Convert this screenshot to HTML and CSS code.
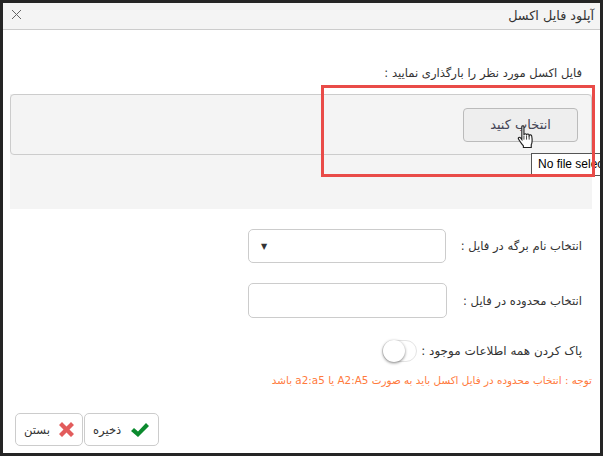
FILE: index.html
```html
<!DOCTYPE html>
<html lang="fa" dir="rtl">
<head>
    <meta charset="UTF-8">
    <meta name="viewport" content="width=device-width, initial-scale=1.0">
    <title>آپلود فایل اکسل</title>
    <link rel="stylesheet" href="styles.css">
</head>
<body>
    <div class="modal">
        <div class="modal-header">
            <div class="modal-title">آپلود فایل اکسل</div>
            <svg class="close-icon" width="9" height="9" viewBox="0 0 9 9">
                <path d="M0 0L9 9M9 0L0 9" stroke="#666" stroke-width="1" fill="none"/>
            </svg>
        </div>
        <div class="modal-body">
            <div class="upload-title">فایل اکسل مورد نظر را بارگذاری نمایید :</div>
            <div class="upload-area">
                <div class="upload-box">
                    <div class="upload-btn">انتخاب کنید</div>
                </div>
            </div>
            <div class="form-row form-row-first">
                <label class="form-label">انتخاب نام برگه در فایل :</label>
                <div class="form-select"><span class="select-arrow">▼</span></div>
            </div>
            <div class="form-row form-row-second">
                <label class="form-label">انتخاب محدوده در فایل :</label>
                <div class="form-input"></div>
            </div>
            <div class="toggle-row">
                <label class="toggle-label">پاک کردن همه اطلاعات موجود :</label>
                <div class="toggle"><div class="toggle-knob"></div></div>
            </div>
            <div class="note">توجه : انتخاب محدوده در فایل اکسل باید به صورت A2:A5 یا a2:a5 باشد</div>
        </div>
        <div class="modal-footer">
            <div class="footer-btn footer-btn-save">
                <svg width="18" height="14" viewBox="0 0 18 14">
                    <path d="M0 8L3 5L7 8.5L15 0L18 3L7 14Z" fill="#0b8a2e"/>
                </svg>
                <span>ذخیره</span>
            </div>
            <div class="footer-btn">
                <svg width="15" height="15" viewBox="0 0 15 15">
                    <path d="M0 3L3 0L7.5 4.5L12 0L15 3L10.5 7.5L15 12L12 15L7.5 10.5L3 15L0 12L4.5 7.5Z" fill="#e25c5c"/>
                </svg>
                <span>بستن</span>
            </div>
        </div>

        <!-- tooltip, annotation and cursor on top of the shot -->
        <div class="tooltip" dir="ltr">No file selected</div>
        <div class="red-frame"></div>
        <svg class="hand" width="19" height="23" viewBox="0 0 15 22">
            <path d="M4 1.5C4 .5 6 .5 6 1.5V9.5C6.5 8 8.3 8 8.5 9.5C9 8.2 10.8 8.4 11 10C11.5 9 13.5 9.2 13.5 11C14 14 14 17 13 19V21.5H5.5V20C4 18 2 16 .8 13.5C.2 12 1.6 11 2.8 12.4L4 14Z" fill="#fff" stroke="#222" stroke-width="1.1"/>
            <path d="M6 10V14M8.5 10V14M11 10V14" stroke="#222" stroke-width=".8" fill="none"/>
        </svg>
    </div>
</body>
</html>
```
FILE: styles.css
```css
html, body {
    margin: 0;
    padding: 0;
    width: 603px;
    height: 456px;
    overflow: hidden;
}

body {
    background-color: #252525;
    padding: 3px;
    box-sizing: border-box;
    font-family: "DejaVu Sans", "Noto Sans", sans-serif;
    font-size: 11.6px;
    color: #333;
}

.modal {
    position: relative;
    width: 597px;
    height: 450px;
    background-color: #fff;
    overflow: hidden;
    display: flex;
    flex-direction: column;
}

.modal-header {
    height: 23px;
    background-color: #f4f4f4;
    border-bottom: 1px solid #ccc;
    display: flex;
    align-items: center;
    justify-content: space-between;
    padding: 0 6px 3px 9px;
}

.modal-title {
    font-size: 12.8px;
    padding-top: 2px;
    color: #333;
}

.modal-body {
    flex: 1;
    padding: 0 8px 0 7px;
}

.upload-title {
    margin-top: 33px;
    padding-right: 10px;
    height: 31px;
    line-height: 20px;
}

.upload-area {
    background-color: #f4f4f4;
    height: 115px;
}

.upload-box {
    height: 59px;
    border: 1px solid #ccc;
    border-radius: 4px;
    display: flex;
    align-items: center;
    padding-right: 13px;
}

.upload-btn {
    width: 113px;
    height: 32px;
    line-height: 31px;
    font-size: 13px;
    text-align: center;
    background-color: #eee;
    border: 1px solid #bbb;
    border-radius: 4px;
    color: #445;
}

.form-row {
    display: flex;
    align-items: center;
    padding-right: 10px;
}

.form-row-first {
    margin-top: 20px;
}

.form-row-second {
    margin-top: 20px;
}

.form-label {
    width: 136px;
    flex-shrink: 0;
}

.form-select, .form-input {
    border: 1px solid #ccc;
    border-radius: 5px;
    background-color: #fff;
}

.form-select {
    display: flex;
    align-items: center;
    justify-content: flex-end;
    padding-left: 12px;
    width: 184px;
    height: 32px;
}

.form-input {
    width: 197px;
    height: 33px;
    margin-right: -1px;
}

.select-arrow {
    font-size: 8px;
}

.toggle-row {
    display: flex;
    align-items: center;
    margin-top: 22px;
    padding-right: 10px;
    gap: 4px;
}

.toggle-label {
    font-size: 12px;
}

.toggle {
    width: 33px;
    height: 20px;
    border: 1px solid #e4e4e4;
    border-radius: 11px;
    display: flex;
    justify-content: flex-end;
}

.toggle-knob {
    width: 22px;
    height: 22px;
    margin: -1px -1px 0 0;
    border-radius: 50%;
    background-color: #fff;
    box-shadow: 0 1px 3px rgba(0, 0, 0, .5);
}

.note {
    margin-top: 12px;
    font-size: 10.4px;
    color: #ff7a3c;
    white-space: nowrap;
}

.modal-footer {
    display: flex;
    justify-content: flex-end;
    padding: 0 0 7px 12px;
    gap: 1px;
}

.footer-btn {
    height: 31px;
    border: 1px solid #ccc;
    border-radius: 5px;
    padding: 0 8px;
    display: flex;
    align-items: center;
    gap: 9px;
    color: #333;
}

.footer-btn-save {
    padding: 0 9px 0 8px;
    gap: 10px;
}

.tooltip {
    position: absolute;
    left: 528px;
    top: 150px;
    width: 100px;
    height: 21px;
    line-height: 21px;
    padding-left: 6px;
    background-color: #fff;
    border: 1px solid #555;
    font-family: "Liberation Sans", sans-serif;
    font-size: 12px;
    color: #000;
    white-space: nowrap;
}

.red-frame {
    position: absolute;
    left: 318px;
    top: 82px;
    width: 268px;
    height: 86px;
    border: 3px solid #e94b48;
}

.hand {
    position: absolute;
    left: 513px;
    top: 122px;
}
```
